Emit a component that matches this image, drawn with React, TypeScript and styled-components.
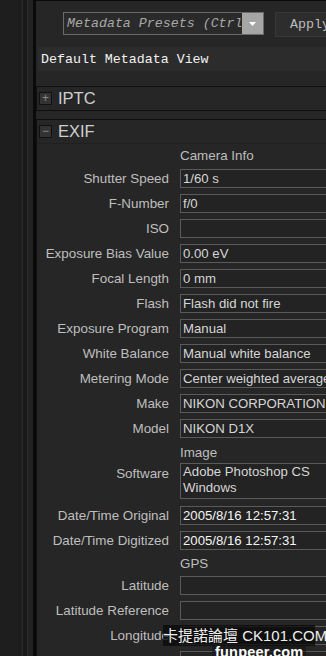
import React from "react";
import styled, { createGlobalStyle } from "styled-components";

const Global = createGlobalStyle`
  html, body { margin: 0; padding: 0; background: #1e1e1e; overflow: hidden; }
  body { width: 326px; height: 656px; }
`;

const Page = styled.div`
  position: relative;
  display: flex;
  width: 326px;
  height: 656px;
  overflow: hidden;
  background: #1e1e1e;
  font-family: "Liberation Sans", Arial, sans-serif;
`;

const Gutter = styled.div`
  flex: none;
  width: 22px;
  background: #1e1e1e;
  border-right: 1px solid #2a2a2a;
`;

const Rail = styled.div`
  flex: none;
  width: 4px;
  background: #191919;
  border-right: 1px solid #2c2c2c;
`;

const Rail2 = styled.div`
  flex: none;
  width: 5px;
  background: #222;
  border-right: 3px solid #0a0a0a;
`;

const Main = styled.div`
  flex: none;
  width: 420px;
  display: flex;
  flex-direction: column;
  background: #262626;
`;

const TopEdge = styled.div`
  height: 2px;
  background: #1c1c1c;
  border-bottom: 1px solid #0b0b0b;
`;

const PresetRow = styled.div`
  display: flex;
  align-items: flex-start;
  gap: 11px;
  padding: 11px 0 0 27px;
`;

const Select = styled.div`
  display: flex;
  width: 201px;
  height: 23px;
  box-sizing: border-box;
  border: 1px solid #6a6a6a;
  background: #2a2a2a;
`;

const SelectText = styled.div`
  flex: 1;
  overflow: hidden;
  white-space: nowrap;
  font-family: "Liberation Mono", "Courier New", monospace;
  font-style: italic;
  font-size: 13.3px;
  line-height: 21px;
  color: #a8a8a8;
  padding-left: 3px;
`;

const SelectButton = styled.div`
  flex: none;
  width: 21px;
  background: #a6a6a6;
  display: flex;
  justify-content: center;
  padding-top: 9px;
  box-sizing: border-box;
`;

const ApplyButton = styled.div`
  width: 90px;
  height: 25px;
  box-sizing: border-box;
  border: 1px solid #383838;
  background: #2d2d2d;
  font-family: "Liberation Mono", "Courier New", monospace;
  font-size: 13.3px;
  line-height: 23px;
  color: #bcbcbc;
  padding-left: 14px;
`;

const ViewBar = styled.div`
  margin: 10px 0 0 2px;
  height: 24px;
  background: #2c2c2c;
  font-family: "Liberation Mono", "Courier New", monospace;
  font-size: 13.3px;
  line-height: 26px;
  color: #f2f2f2;
  padding-left: 3px;
`;

const Section = styled.div<{ $first?: boolean; $grow?: boolean }>`
  margin-top: ${(p) => (p.$first ? "15px" : "8px")};
  border: 1px solid #0f0f0f;
  border-right: none;
  ${(p) => (p.$grow ? "flex: 1; border-bottom: none;" : "")}
  display: flex;
  flex-direction: column;
`;

const SectionHeader = styled.div`
  height: 23px;
  display: flex;
  align-items: center;
  gap: 6px;
  padding-left: 2px;
  font-size: 16.5px;
  color: #cfcfcf;
`;

const Toggle = styled.div`
  width: 11px;
  height: 11px;
  border: 1px solid #111;
  background: #333;
  color: #8a8a8a;
  font-size: 12px;
  line-height: 11px;
  text-align: center;
`;

const Body = styled.div`
  display: flex;
  flex-direction: column;
  border-top: 1px solid #202020;
`;

const GroupTitle = styled.div<{ $h: number }>`
  height: ${(p) => p.$h}px;
  box-sizing: border-box;
  display: flex;
  align-items: center;
  padding-left: 143px;
  padding-top: 1px;
  font-size: 13.4px;
  color: #bdbdbd;
`;

const Row = styled.div<{ $tall?: boolean }>`
  display: grid;
  grid-template-columns: 132px 1fr;
  column-gap: 11px;
  align-items: ${(p) => (p.$tall ? "start" : "center")};
  height: ${(p) => (p.$tall ? 41 : 25)}px;
`;

const Label = styled.div<{ $tall?: boolean }>`
  text-align: right;
  font-size: 13.4px;
  color: #bfbfbf;
  white-space: nowrap;
  padding-top: ${(p) => (p.$tall ? 4 : 0)}px;
`;

const Value = styled.div<{ $tall?: boolean; $bright?: boolean }>`
  height: ${(p) => (p.$tall ? 36 : 19)}px;
  margin-top: ${(p) => (p.$tall ? 1 : 0)}px;
  box-sizing: border-box;
  border: 1px solid #5a5a5a;
  background: #232323;
  font-size: 13.2px;
  line-height: ${(p) => (p.$tall ? 16 : 17)}px;
  color: ${(p) => (p.$bright ? "#f4f4f4" : "#d6d6d6")};
  padding-left: 2px;
  white-space: pre-line;
  overflow: hidden;
`;

const Watermark = styled.div`
  position: absolute;
  left: 163px;
  top: 625px;
  width: 152px;
  height: 21px;
  background: rgba(10, 10, 10, 0.75);
  color: #eeeeee;
  font-size: 15px;
  line-height: 21px;
  white-space: nowrap;
  font-family: "Liberation Sans", "Noto Sans CJK TC", sans-serif;
`;

const Funpeer = styled.div`
  position: absolute;
  left: 212px;
  top: 645px;
  padding: 0 3px;
  background: rgba(20, 20, 20, 0.6);
  color: #ffffff;
  font-size: 14.5px;
  font-weight: bold;
  line-height: 14px;
  letter-spacing: 0.2px;
`;

type Item =
  | { kind: "title"; text: string; h: number }
  | { kind: "row"; label: string; value: string; tall?: boolean; bright?: boolean };

const items: Item[] = [
  { kind: "title", text: "Camera Info", h: 22 },
  { kind: "row", label: "Shutter Speed", value: "1/60 s" },
  { kind: "row", label: "F-Number", value: "f/0" },
  { kind: "row", label: "ISO", value: "" },
  { kind: "row", label: "Exposure Bias Value", value: "0.00 eV" },
  { kind: "row", label: "Focal Length", value: "0 mm" },
  { kind: "row", label: "Flash", value: "Flash did not fire" },
  { kind: "row", label: "Exposure Program", value: "Manual" },
  { kind: "row", label: "White Balance", value: "Manual white balance" },
  { kind: "row", label: "Metering Mode", value: "Center weighted average" },
  { kind: "row", label: "Make", value: "NIKON CORPORATION" },
  { kind: "row", label: "Model", value: "NIKON D1X" },
  { kind: "title", text: "Image", h: 21 },
  { kind: "row", label: "Software", value: "Adobe Photoshop CS\nWindows", tall: true },
  { kind: "row", label: "Date/Time Original", value: "2005/8/16 12:57:31", bright: true },
  { kind: "row", label: "Date/Time Digitized", value: "2005/8/16 12:57:31", bright: true },
  { kind: "title", text: "GPS", h: 20 },
  { kind: "row", label: "Latitude", value: "" },
  { kind: "row", label: "Latitude Reference", value: "" },
  { kind: "row", label: "Longitude", value: "" },
  { kind: "row", label: "Longitude Reference", value: "" },
];

export default function App() {
  return (
    <>
      <Global />
      <Page>
        <Gutter />
        <Rail />
        <Rail2 />
        <Main>
          <TopEdge />
          <PresetRow>
            <Select>
              <SelectText>Metadata Presets (Ctrl+Shift+M)</SelectText>
              <SelectButton>
                <svg width="7" height="4" viewBox="0 0 7 4">
                  <path d="M0 0 H7 L3.5 4 Z" fill="#fff" />
                </svg>
              </SelectButton>
            </Select>
            <ApplyButton>Apply</ApplyButton>
          </PresetRow>
          <ViewBar>Default Metadata View</ViewBar>
          <Section $first>
            <SectionHeader>
              <Toggle>+</Toggle>
              IPTC
            </SectionHeader>
          </Section>
          <Section $grow>
            <SectionHeader>
              <Toggle>−</Toggle>
              EXIF
            </SectionHeader>
            <Body>
              {items.map((it, i) =>
                it.kind === "title" ? (
                  <GroupTitle key={i} $h={it.h}>
                    {it.text}
                  </GroupTitle>
                ) : (
                  <Row key={i} $tall={it.tall}>
                    <Label $tall={it.tall}>{it.label}</Label>
                    <Value $tall={it.tall} $bright={it.bright}>
                      {it.value}
                    </Value>
                  </Row>
                )
              )}
            </Body>
          </Section>
        </Main>
        <Watermark>卡提諾論壇 CK101.COM</Watermark>
        <Funpeer>funpeer.com</Funpeer>
      </Page>
    </>
  );
}
